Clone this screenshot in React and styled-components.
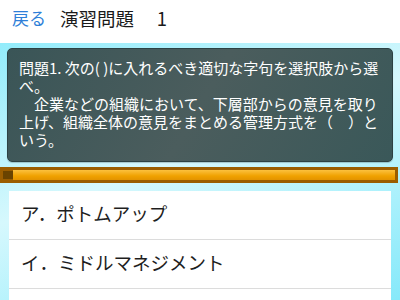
import React from 'react';
import styled, { createGlobalStyle } from 'styled-components';

const GlobalStyle = createGlobalStyle`
  html, body {
    margin: 0;
    padding: 0;
    width: 400px;
    height: 300px;
    overflow: hidden;
  }
  body {
    font-family: "Noto Sans CJK JP", "Noto Sans", sans-serif;
  }
`;

const Screen = styled.div`
  width: 400px;
  height: 300px;
  display: flex;
  flex-direction: column;
  overflow: hidden;
`;

const Header = styled.header`
  height: 43px;
  flex-shrink: 0;
  background: #fff;
  display: flex;
  align-items: center;
  padding: 0 12px 8px;
  box-sizing: border-box;
  gap: 14px;
`;

const BackLink = styled.a`
  color: #2f7fd8;
  font-size: 17px;
  text-decoration: none;
  cursor: pointer;
`;

const Title = styled.h1`
  margin: 0;
  font-size: 18.5px;
  font-weight: normal;
  color: #1a1a1a;
  white-space: pre;
`;

const Body = styled.main`
  flex: 1;
  background: linear-gradient(160deg, #93ecfb 0%, #d6f8fd 45%, #a8f0fc 75%, #86e9fa 100%);
  padding: 5px 0 0;
  display: flex;
  flex-direction: column;
`;

const QuestionBox = styled.section`
  margin: 0 7px;
  padding: 10px 10px 12px 11px;
  border-radius: 5px;
  border: 1px solid #2c4244;
  background: linear-gradient(120deg, #3a5557 0%, #4b5d5d 50%, #3a5859 100%);
  color: #fff;
  font-size: 15px;
  line-height: 18px;
  box-shadow: 0 1px 1px rgba(0, 0, 0, 0.2);
`;

const Line = styled.div`
  white-space: nowrap;
`;

const ProgressTrack = styled.div`
  margin: 5px 2px 0 0;
  height: 16px;
  box-sizing: border-box;
  background: #9b5d00;
  padding: 3px;
  display: flex;
  align-items: stretch;
`;

const ProgressDone = styled.div`
  width: 10px;
  background: #6a4300;
  margin: 1px 0;
`;

const ProgressRest = styled.div`
  flex: 1;
  background: linear-gradient(#fcc13e, #f0a100 60%, #e39300);
`;

const ChoiceList = styled.ul`
  list-style: none;
  margin: 8px 9px 0;
  padding: 0;
  background: #fff;
  flex: 1;
`;

const Choice = styled.li`
  height: 49px;
  box-sizing: border-box;
  display: flex;
  align-items: center;
  padding: 0 12px 4px;
  font-size: 18.5px;
  color: #1e1e1e;
  border-bottom: 1px solid #dcdcdc;
`;

const choices = ['ア．ポトムアップ', 'イ．ミドルマネジメント'];

export default function App() {
  return (
    <Screen>
      <GlobalStyle />
      <Header>
        <BackLink>戻る</BackLink>
        <Title>演習問題　 1</Title>
      </Header>
      <Body>
        <QuestionBox>
          <Line>問題1. 次の( )に入れるべき適切な字句を選択肢から選</Line>
          <Line>べ。</Line>
          <Line>　企業などの組織において、下層部からの意見を取り</Line>
          <Line>上げ、組織全体の意見をまとめる管理方式を（　）と</Line>
          <Line>いう。</Line>
        </QuestionBox>
        <ProgressTrack>
          <ProgressDone />
          <ProgressRest />
        </ProgressTrack>
        <ChoiceList>
          {choices.map((c) => (
            <Choice key={c}>{c}</Choice>
          ))}
        </ChoiceList>
      </Body>
    </Screen>
  );
}
